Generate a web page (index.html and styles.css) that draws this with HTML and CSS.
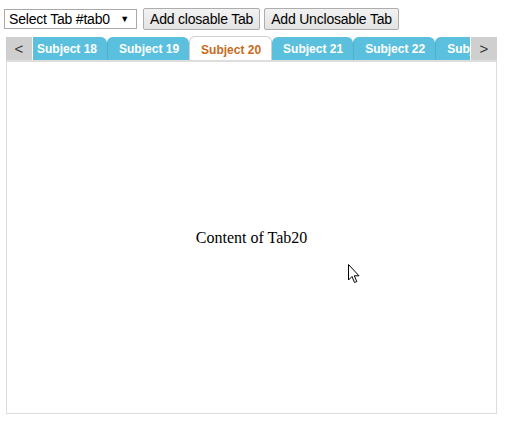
FILE: index.html
```html
<!DOCTYPE html>
<html>
<head>
<meta charset="utf-8">
<link rel="stylesheet" href="styles.css">
</head>
<body>
<div class="toolbar">
  <div class="select"><span class="select-text">Select Tab #tab0</span><span class="select-arrow">▼</span></div>
  <button class="btn">Add closable Tab</button>
  <button class="btn">Add Unclosable Tab</button>
</div>
<div class="tabs">
  <div class="strip">
    <div class="nav">&lt;</div>
    <div class="viewport">
      <div class="track">
        <div class="tab">Subject 18</div>
        <div class="tab">Subject 19</div>
        <div class="tab active">Subject 20</div>
        <div class="tab">Subject 21</div>
        <div class="tab">Subject 22</div>
        <div class="tab">Subject 23</div>
      </div>
    </div>
    <div class="nav">&gt;</div>
  </div>
  <div class="panel">Content of Tab20</div>
  <svg class="cursor" width="12" height="20" viewBox="0 0 12 20"><path d="M0.5 0.5 L0.5 16 L4 12.5 L6.5 18.5 L8.8 17.5 L6.3 11.8 L11 11.8 Z" fill="#fff" stroke="#000" stroke-width="1" stroke-linejoin="miter"/></svg>
</div>
</body>
</html>
```
FILE: styles.css
```css
html, body { margin: 0; padding: 0; background: #fff; }
body { padding: 8px 0 0 0; font-family: "Liberation Sans", Arial, sans-serif; }
.toolbar { display: flex; align-items: center; gap: 5px; padding-left: 4px; height: 22px; }
.select {
  box-sizing: border-box; width: 133px; height: 20px; border: 1px solid #a9a9a9;
  display: flex; align-items: center; justify-content: space-between;
  padding: 0 7px 0 4px; font-size: 14px; color: #000; background: #fff;
  letter-spacing: -0.2px; margin-right: 1px;
}
.select-arrow { font-size: 9px; }
.btn {
  box-sizing: border-box; height: 22px; margin: 0; padding: 0 6px;
  font-family: "Liberation Sans", Arial, sans-serif; font-size: 14px; color: #000;
  letter-spacing: -0.2px;
  border: 1px solid #adadad; border-radius: 2px;
  background: linear-gradient(#f2f2f2, #e3e3e3);
}
.btn + .btn { margin-left: -1px; }
.tabs { position: relative; margin: 6px 11px 0 6px; }
.strip { display: flex; height: 25px; border-bottom: 1px solid #ddd; box-sizing: border-box; }
.nav {
  width: 26px; flex: none; background: #cfcfcf; color: #333; font-size: 15px;
  display: flex; align-items: center; justify-content: center; margin-top: 1px;
}
.viewport { flex: 1; overflow: hidden; margin-left: 1px; margin-right: 1px; }
.track { display: flex; margin-left: -7px; height: 100%; align-items: flex-end; }
.tab {
  flex: none; box-sizing: border-box; height: 23px; padding: 0 10px 0 11px;
  background: #5bc0de; color: #fff; font-weight: bold; font-size: 12px;
  display: flex; align-items: center; border-radius: 6px 6px 0 0;
  border-left: 1px solid #4fb1cf; white-space: nowrap;
}
.tab:first-child { border-left: none; }
.tab.active {
  background: #fff; color: #c76a1d; border: 1px solid #cfcfcf; border-bottom: none;
  height: 25px; margin-bottom: -1px; padding: 1px 10px 0 11px;
}
.tab.active + .tab { border-left: none; }
.panel {
  box-sizing: border-box; height: 353px; border: 1px solid #ddd;
  display: flex; align-items: center; justify-content: center;
  font-family: "Liberation Serif", "Times New Roman", serif; font-size: 16px; color: #000;
}
.cursor { position: absolute; left: 342px; top: 228px; }
```
